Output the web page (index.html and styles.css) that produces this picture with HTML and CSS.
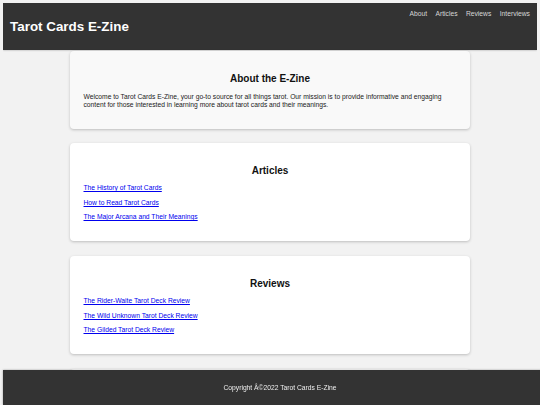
FILE: index.html
```html
<!DOCTYPE html>
<html lang="en">
<head>
<meta charset="utf-8">
<title>Tarot Cards E-Zine</title>
<link rel="stylesheet" href="styles.css">
</head>
<body>
<header class="site-header">
  <h1 class="site-title">Tarot Cards E-Zine</h1>
  <nav class="site-nav">
    <a href="#about">About</a>
    <a href="#articles">Articles</a>
    <a href="#reviews">Reviews</a>
    <a href="#interviews">Interviews</a>
  </nav>
</header>
<main class="content">
  <section class="card card-about" id="about">
    <h2>About the E-Zine</h2>
    <p>Welcome to Tarot Cards E-Zine, your go-to source for all things tarot. Our mission is to provide informative and engaging content for those interested in learning more about tarot cards and their meanings.</p>
  </section>
  <section class="card" id="articles">
    <h2>Articles</h2>
    <p><a href="#">The History of Tarot Cards</a></p>
    <p><a href="#">How to Read Tarot Cards</a></p>
    <p><a href="#">The Major Arcana and Their Meanings</a></p>
  </section>
  <section class="card" id="reviews">
    <h2>Reviews</h2>
    <p><a href="#">The Rider-Waite Tarot Deck Review</a></p>
    <p><a href="#">The Wild Unknown Tarot Deck Review</a></p>
    <p><a href="#">The Gilded Tarot Deck Review</a></p>
  </section>
  <section class="card" id="interviews">
    <h2>Interviews</h2>
    <p><a href="#">An Interview with a Professional Tarot Reader</a></p>
    <p><a href="#">Tarot and Astrology: A Conversation</a></p>
  </section>
</main>
<footer class="site-footer">
  <p>Copyright Â©2022 Tarot Cards E-Zine</p>
</footer>
</body>
</html>
```

FILE: styles.css
```css
html, body {
  background: #f2f2f2;
}
body {
  margin: 3.36px;
  font-family: "Liberation Sans", Arial, sans-serif;
  font-size: 6.72px;
  line-height: 7.8px;
  color: #222;
}
.site-header {
  background: #333;
  color: #fff;
  padding: 6.7px;
  display: flex;
  justify-content: space-between;
  align-items: flex-start;
  box-shadow: 0 0 2px rgba(0, 0, 0, 0.35);
}
.site-title {
  margin: 9px 0;
  font-size: 13.4px;
  line-height: 15.4px;
  font-weight: bold;
}
.site-nav {
  display: flex;
  gap: 8.4px;
}
.site-nav a {
  color: #d6d6d6;
  text-decoration: none;
  font-size: 6.72px;
}
.content {
  display: flex;
  flex-direction: column;
  align-items: center;
  gap: 14.3px;
  padding-top: 1px;
  padding-bottom: 40px;
}
.card {
  width: 400px;
  box-sizing: border-box;
  padding: 13.5px;
  background: #fff;
  border-radius: 4px;
  box-shadow: 0 1px 3px rgba(0, 0, 0, 0.22);
}
.card-about {
  background: #f9f9f9;
}
.card h2 {
  margin: 8.3px 0;
  font-size: 10px;
  line-height: 11.5px;
  text-align: center;
  color: #111;
}
.card p {
  margin: 6.72px 0;
}
.card a {
  color: #0000ee;
}
.site-footer {
  position: fixed;
  bottom: 0;
  width: 100%;
  padding: 6.7px;
  background: #333;
  color: #eee;
  text-align: center;
  box-shadow: 0 0 2px rgba(0, 0, 0, 0.35);
}
.site-footer p {
  margin: 6.72px 0;
}
```
